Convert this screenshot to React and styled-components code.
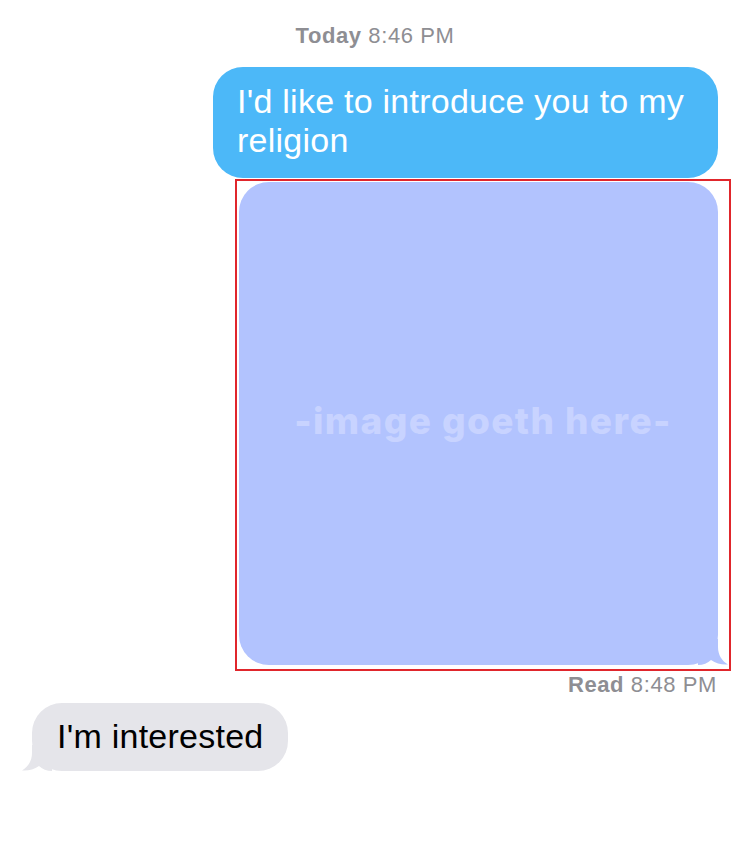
import React from "react";
import styled, { createGlobalStyle } from "styled-components";

const GlobalStyle = createGlobalStyle`
  html, body {
    margin: 0;
    padding: 0;
    background: #fff;
  }
  body {
    font-family: "Liberation Sans", Arial, sans-serif;
    -webkit-font-smoothing: antialiased;
  }
`;

const Thread = styled.div`
  width: 750px;
  min-height: 851px;
  box-sizing: border-box;
  padding-top: 22px;
  display: flex;
  flex-direction: column;
`;

const Stamp = styled.div`
  font-size: 22px;
  line-height: 28px;
  letter-spacing: 0.6px;
  color: #8e8e93;
  text-align: ${(p) => p.align || "center"};
  padding-right: ${(p) => p.inset || 0}px;
  b {
    font-weight: 700;
  }
`;

const Row = styled.div`
  display: flex;
  justify-content: ${(p) => (p.out ? "flex-end" : "flex-start")};
  padding: ${(p) => (p.out ? `0 ${p.inset || 32}px 0 0` : "0 0 0 32px")};
  margin-top: ${(p) => p.gap || 0}px;
`;

const Bubble = styled.div`
  position: relative;
  box-sizing: border-box;
  width: ${(p) => p.w}px;
  padding: ${(p) => p.pad};
  border-radius: 30px;
  background: ${(p) => (p.out ? "#4cb8f8" : "#e5e5ea")};
  color: ${(p) => (p.out ? "#fff" : "#000")};
  font-size: 34px;
  line-height: 39px;
  letter-spacing: 0.25px;
`;

const Frame = styled.div`
  box-sizing: border-box;
  width: 496px;
  height: 492px;
  border: 2px solid #e0262c;
  padding: 1px 11px 4px 2px;
`;

const Photo = styled.div`
  position: relative;
  width: 479px;
  height: 483px;
  border-radius: 30px;
  background: #b2c3fe;
  display: flex;
  align-items: center;
  justify-content: center;
`;

const Placeholder = styled.span`
  font-family: "Inter", "Open Sans", sans-serif;
  font-weight: 800;
  font-size: 37px;
  letter-spacing: 1.4px;
  color: #c8d3ff;
  margin-left: 9px;
  margin-top: -6px;
`;

const Tail = styled.svg`
  position: absolute;
  bottom: 0;
  ${(p) => (p.left ? "left: -10px; transform: scaleX(-1);" : "right: -10px;")}
  width: 30px;
  height: 26px;
  display: block;
`;

function BubbleTail({ left, color }) {
  return (
    <Tail left={left ? 1 : 0} viewBox="0 0 30 26">
      <path
        d="M20 0 L20 8 C20 16 24 22 30 25.5 C24 26 18 24.5 13 21 C10 24 5 26 0 26 L0 0 Z"
        fill={color}
      />
    </Tail>
  );
}

export default function App() {
  return (
    <>
      <GlobalStyle />
      <Thread>
        <Stamp>
          <b>Today</b> 8:46 PM
        </Stamp>
        <Row out gap={17}>
          <Bubble out w={505} pad="15px 24px 18px 24px">
            I'd like to introduce you to my religion
          </Bubble>
        </Row>
        <Row out inset={19} gap={1}>
          <Frame>
            <Photo>
              <Placeholder>-image goeth here-</Placeholder>
              <BubbleTail color="#b2c3fe" />
            </Photo>
          </Frame>
        </Row>
        <Stamp align="right" inset={33}>
          <b>Read</b> 8:48 PM
        </Stamp>
        <Row gap={4}>
          <Bubble w={256} pad="14px 24px 15px 25px">
            I'm interested
            <BubbleTail left color="#e5e5ea" />
          </Bubble>
        </Row>
      </Thread>
    </>
  );
}
